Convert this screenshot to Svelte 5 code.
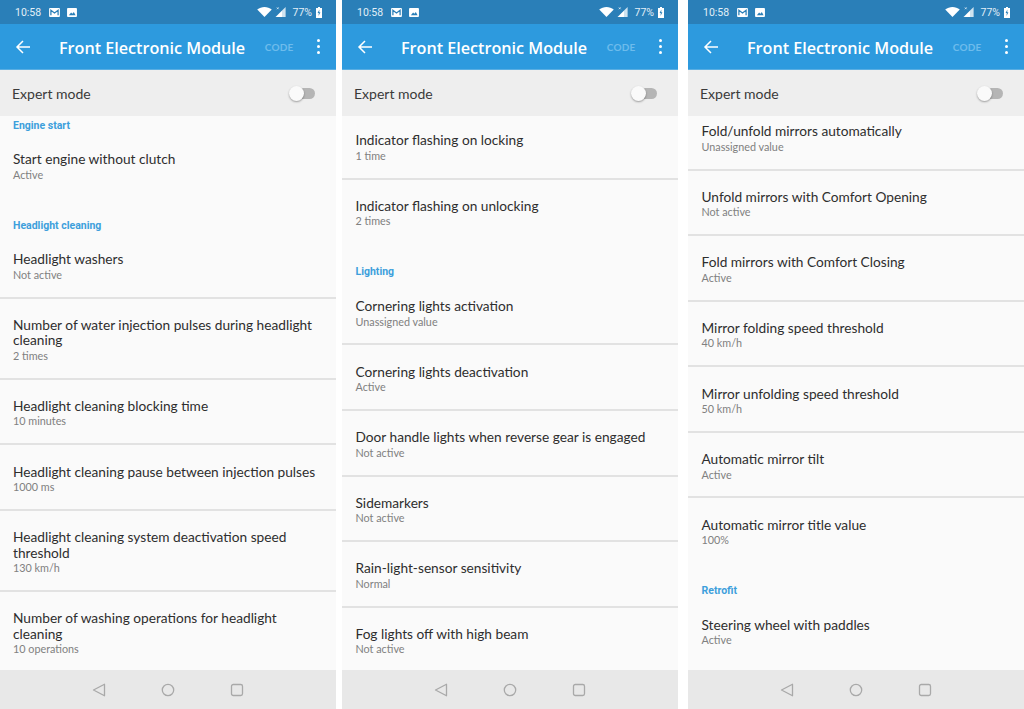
<script>
  const panels = [
    { offset: -17.5, items: [
      { h: 'Engine start' },
      { t: 'Start engine without clutch', s: 'Active', last: true },
      { h: 'Headlight cleaning' },
      { t: 'Headlight washers', s: 'Not active' },
      { t: 'Number of water injection pulses during headlight cleaning', s: '2 times' },
      { t: 'Headlight cleaning blocking time', s: '10 minutes' },
      { t: 'Headlight cleaning pause between injection pulses', s: '1000 ms' },
      { t: 'Headlight cleaning system deactivation speed threshold', s: '130 km/h' },
      { t: 'Number of washing operations for headlight cleaning', s: '10 operations' }
    ]},
    { offset: -1.8, items: [
      { t: 'Indicator flashing on locking', s: '1 time' },
      { t: 'Indicator flashing on unlocking', s: '2 times', last: true },
      { h: 'Lighting' },
      { t: 'Cornering lights activation', s: 'Unassigned value' },
      { t: 'Cornering lights deactivation', s: 'Active' },
      { t: 'Door handle lights when reverse gear is engaged', s: 'Not active' },
      { t: 'Sidemarkers', s: 'Not active' },
      { t: 'Rain-light-sensor sensitivity', s: 'Normal' },
      { t: 'Fog lights off with high beam', s: 'Not active' }
    ]},
    { offset: -11, items: [
      { t: 'Fold/unfold mirrors automatically', s: 'Unassigned value' },
      { t: 'Unfold mirrors with Comfort Opening', s: 'Not active' },
      { t: 'Fold mirrors with Comfort Closing', s: 'Active' },
      { t: 'Mirror folding speed threshold', s: '40 km/h' },
      { t: 'Mirror unfolding speed threshold', s: '50 km/h' },
      { t: 'Automatic mirror tilt', s: 'Active' },
      { t: 'Automatic mirror title value', s: '100%', last: true },
      { h: 'Retrofit' },
      { t: 'Steering wheel with paddles', s: 'Active', last: true }
    ]}
  ];
</script>

<div class="screen">
  {#each panels as p}
    <section class="phone">
      <div class="status">
        <span class="time">10:58</span>
        <svg class="si" width="11" height="9" viewBox="0 0 12 10"><rect width="12" height="10" rx="1" fill="#fff"/><path d="M2 8V2.5L6 5.5L10 2.5V8" fill="none" stroke="#2a7fb8" stroke-width="1.4"/></svg>
        <svg class="si" width="10" height="9" viewBox="0 0 11 10"><rect width="11" height="10" rx="1" fill="#fff"/><path d="M2 8L4.5 5L6 6.5L7.5 4.5L9.5 8Z" fill="#2a7fb8"/></svg>
        <span class="grow"></span>
        <svg width="15" height="10" viewBox="0 0 16 11"><path d="M0 2.8C4.5 -0.9 11.5 -0.9 16 2.8L8 11Z" fill="#fff"/></svg>
        <svg class="sig" width="12" height="12" viewBox="0 0 12 13"><path d="M11 1V12H0Z" fill="#cfe3f0"/><path d="M7 5.5V12H0.6Z" fill="#fff"/><path d="M1.5 1.5L3.5 3.5M3.5 1.5L1.5 3.5" stroke="#fff" stroke-width=".7"/></svg>
        <span class="pct">77%</span>
        <svg width="6" height="11" viewBox="0 0 6 11"><path d="M2 0H4V1H6V11H0V1H2Z" fill="#fff"/><path d="M3.4 2.5L1.6 6H2.8L2.5 9L4.4 5.3H3.2Z" fill="#2a7fb8"/></svg>
      </div>
      <header class="bar">
        <svg class="back" width="16" height="16" viewBox="0 0 16 16"><path d="M15 8H2M8 2L2 8L8 14" fill="none" stroke="#fff" stroke-width="1.5"/></svg>
        <h1>Front Electronic Module</h1>
        <span class="code">CODE</span>
        <span class="dots"><i></i><i></i><i></i></span>
      </header>
      <div class="expert">
        <span>Expert mode</span>
        <span class="switch"><span class="track"></span><span class="thumb"></span></span>
      </div>
      <div class="list">
        <div class="inner" style="margin-top:{p.offset}px">
          {#each p.items as it}
            {#if it.h}
              <div class="head">{it.h}</div>
            {:else}
              <div class="row" class:last={it.last}>
                <div class="title">{it.t}</div>
                <div class="sub">{it.s}</div>
              </div>
            {/if}
          {/each}
        </div>
      </div>
      <nav class="nav">
        <svg width="14" height="14" viewBox="0 0 14 14"><path d="M12.5 1.2V12.8L1.5 7Z" fill="none" stroke="#a9a9a9" stroke-width="1.3" stroke-linejoin="round"/></svg>
        <svg width="14" height="14" viewBox="0 0 14 14"><circle cx="7" cy="7" r="5.7" fill="none" stroke="#a9a9a9" stroke-width="1.3"/></svg>
        <svg width="14" height="14" viewBox="0 0 14 14"><rect x="1.5" y="1.5" width="11" height="11" rx="1.8" fill="none" stroke="#a9a9a9" stroke-width="1.3"/></svg>
      </nav>
    </section>
  {/each}
</div>

<style>
  :global(body) { margin: 0; background: #fff; }
  .screen { display: flex; width: 1024px; height: 709px; font-family: Lato, "Noto Sans", sans-serif; overflow: hidden; }
  .phone { width: 336px; height: 709px; display: flex; flex-direction: column; background: #fafafa; margin-right: 6px; --pad: 13.5px; }
  .phone:nth-child(1) { --pad: 13px; }
  .phone:nth-child(2) { margin-right: 10px; }
  .phone:nth-child(3) { margin-right: 0; }
  .status { height: 24px; background: #2a7fb8; color: #e3eff7; display: flex; align-items: center; padding: 0 14px 0 15px; font-family: Roboto, sans-serif; font-size: 10.5px; box-sizing: border-box; }
  .si { margin-left: 7px; }
  .time { margin-right: 1px; }
  .grow { flex: 1; }
  .sig { margin-left: 3px; }
  .pct { margin: 0 4px 0 6px; }
  .bar { height: 46px; background: #2d9ade; display: flex; align-items: center; color: #fff; box-sizing: border-box; border-bottom: 1px solid #5aaee2; }
  .back { margin-left: 15px; }
  h1 { margin: 2px 0 0 28px; white-space: nowrap; flex: 1; font-family: "Open Sans", sans-serif; font-weight: 600; font-size: 16.2px; letter-spacing: -0.02px; }
  .code { font-size: 10px; color: #6dbcec; font-weight: 700; margin-right: 23px; letter-spacing: .2px; }
  .dots { display: flex; flex-direction: column; gap: 3px; margin-right: 16.5px; }
  .dots i { width: 3px; height: 3px; border-radius: 50%; background: #fff; display: block; }
  .expert { height: 46px; background: #eeeeee; display: flex; align-items: center; justify-content: space-between; padding: 0 21px 0 12px; font-size: 14px; color: #3a3a3a; }
  .switch { position: relative; width: 26px; height: 14px; }
  .track { position: absolute; left: 4px; right: 0; top: 2px; height: 11px; border-radius: 6px; background: #b5b5b5; }
  .thumb { position: absolute; left: 0; top: 0; width: 15px; height: 15px; border-radius: 50%; background: #fafafa; box-shadow: 0 1px 2px rgba(0,0,0,.35); }
  .list { flex: 1; overflow: hidden; min-height: 0; }
  .head { font-family: Roboto, sans-serif; font-size: 10.5px; font-weight: 700; color: #3d9fdc; padding: 21px var(--pad) 0; box-sizing: border-box; height: 34.5px; line-height: 12px; }
  .row { padding: 18.2px var(--pad) 14.4px; border-bottom: 2px solid #e2e2e2; }
  .row.last { border-bottom-color: transparent; }
  .title { font-size: 13.7px; line-height: 15.5px; color: #2e2e2e; }
  .sub { font-size: 10.8px; line-height: 15.5px; color: #808080; }
  .nav { height: 39px; background: #e8e8e8; display: flex; align-items: center; justify-content: center; gap: 55px; }
</style>
